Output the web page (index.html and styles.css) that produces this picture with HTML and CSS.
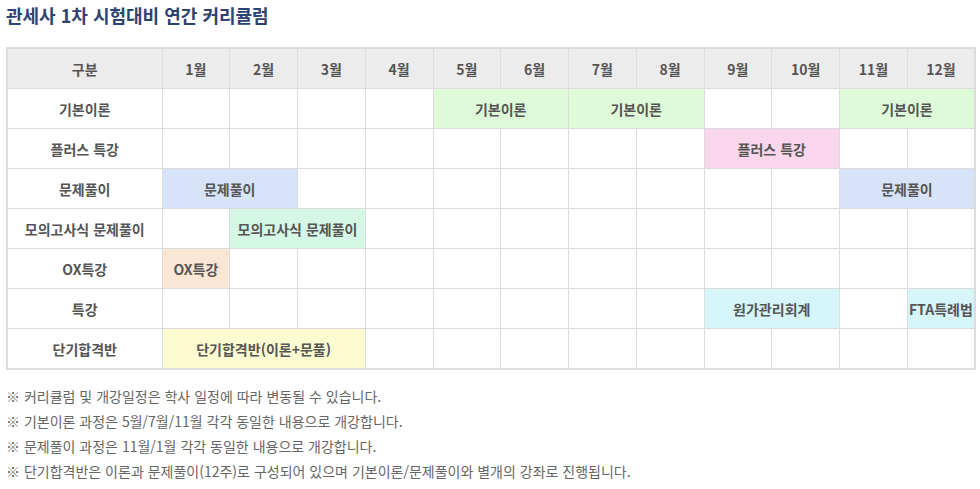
FILE: index.html
```html
<!DOCTYPE html>
<html lang="ko">
<head>
<meta charset="utf-8">
<link rel="stylesheet" href="styles.css">
</head>
<body>
<h2 class="title">관세사 1차 시험대비 연간 커리큘럼</h2>
<table class="cur">
<colgroup>
<col class="c-first">
<col span="12" class="c-m">
</colgroup>
<thead>
<tr><th>구분</th><th>1월</th><th>2월</th><th>3월</th><th>4월</th><th>5월</th><th>6월</th><th>7월</th><th>8월</th><th>9월</th><th>10월</th><th>11월</th><th>12월</th></tr>
</thead>
<tbody>
<tr><th>기본이론</th><td></td><td></td><td></td><td></td><td colspan="2" class="green">기본이론</td><td colspan="2" class="green">기본이론</td><td></td><td></td><td colspan="2" class="green">기본이론</td></tr>
<tr><th>플러스 특강</th><td></td><td></td><td></td><td></td><td></td><td></td><td></td><td></td><td colspan="2" class="pink">플러스 특강</td><td></td><td></td></tr>
<tr><th>문제풀이</th><td colspan="2" class="blue">문제풀이</td><td></td><td></td><td></td><td></td><td></td><td></td><td></td><td></td><td colspan="2" class="blue">문제풀이</td></tr>
<tr><th>모의고사식 문제풀이</th><td></td><td colspan="2" class="mint">모의고사식 문제풀이</td><td></td><td></td><td></td><td></td><td></td><td></td><td></td><td></td><td></td></tr>
<tr><th>OX특강</th><td class="peach">OX특강</td><td></td><td></td><td></td><td></td><td></td><td></td><td></td><td></td><td></td><td></td><td></td></tr>
<tr><th>특강</th><td></td><td></td><td></td><td></td><td></td><td></td><td></td><td></td><td colspan="2" class="cyan">원가관리회계</td><td></td><td class="cyan">FTA특례법</td></tr>
<tr><th>단기합격반</th><td colspan="3" class="yellow">단기합격반(이론+문풀)</td><td></td><td></td><td></td><td></td><td></td><td></td><td></td><td></td><td></td></tr>
</tbody>
</table>
<ul class="notes">
<li>※ 커리큘럼 및 개강일정은 학사 일정에 따라 변동될 수 있습니다.</li>
<li>※ 기본이론 과정은 5월/7월/11월 각각 동일한 내용으로 개강합니다.</li>
<li>※ 문제풀이 과정은 11월/1월 각각 동일한 내용으로 개강합니다.</li>
<li>※ 단기합격반은 이론과 문제풀이(12주)로 구성되어 있으며 기본이론/문제풀이와 별개의 강좌로 진행됩니다.</li>
</ul>
</body>
</html>
```
FILE: styles.css
```css
html, body {
  margin: 0;
  padding: 0;
  background: #fff;
}
body {
  padding: 0 4px 0 6px;
  font-family: "Noto Sans CJK KR", "Noto Sans", sans-serif;
  color: #555;
}
.title {
  margin: 0;
  padding-top: 3px;
  height: 47px;
  box-sizing: border-box;
  font-size: 18px;
  line-height: 25px;
  font-weight: 700;
  color: #2d4470;
}
.cur {
  width: 970px;
  table-layout: fixed;
  border-collapse: collapse;
  border: 2px solid #dcdcdc;
}
.c-first { width: 155px; }
.cur th, .cur td {
  height: 39px;
  border: 1px solid #dcdcdc;
  padding: 0;
  text-align: center;
  vertical-align: middle;
  font-size: 14px;
  font-weight: 700;
  color: #555;
  white-space: nowrap;
  overflow: hidden;
}
.cur thead th {
  background: #ececec;
}
.cur tbody th {
  background: #fff;
}
.green { background: #dffad8; }
.pink { background: #f9d6eb; }
.blue { background: #d6e3f8; }
.mint { background: #d5f7e6; }
.peach { background: #f9e6d4; }
.cyan { background: #d5f5f8; }
.yellow { background: #fdfbd0; }
.notes {
  list-style: none;
  margin: 14px 0 0;
  padding: 0;
  font-size: 14px;
  line-height: 25px;
  color: #666;
}
```
